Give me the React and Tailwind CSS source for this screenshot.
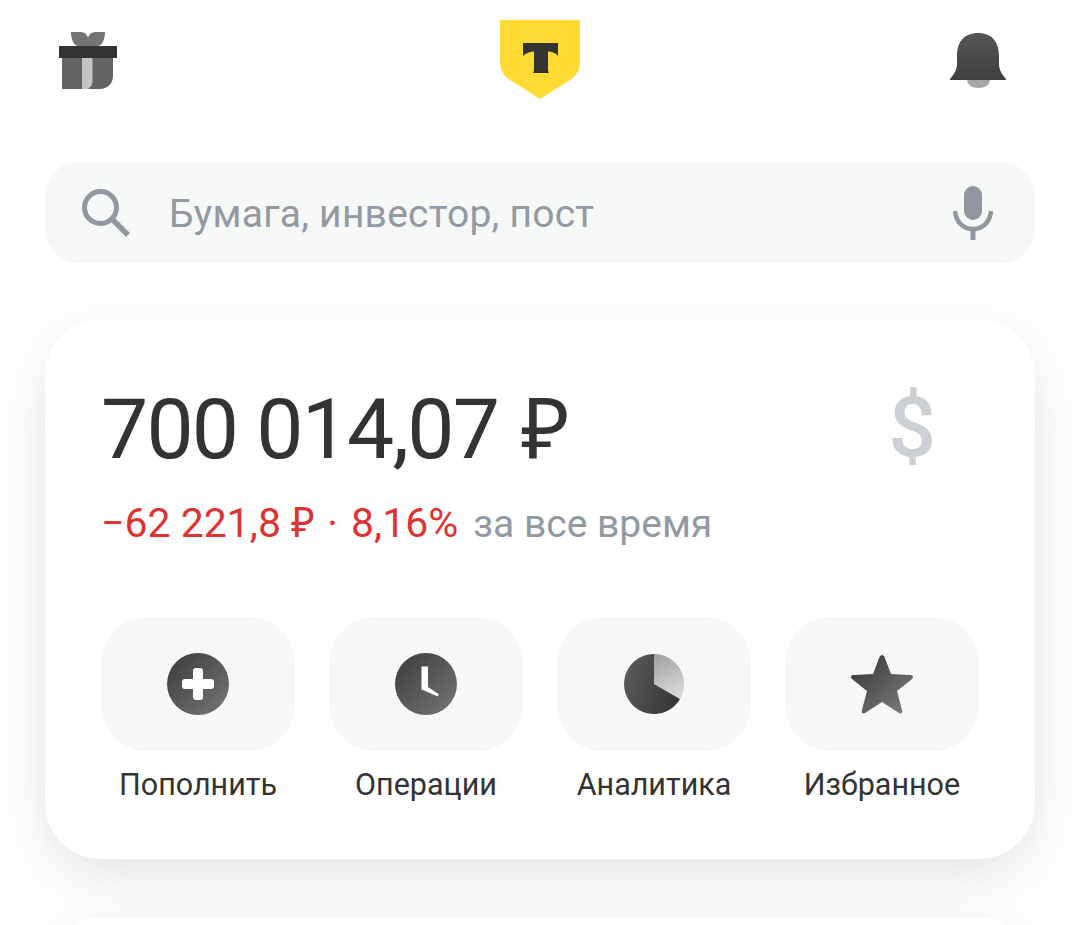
const FONT = "font-['Roboto','Noto_Sans',sans-serif]";

function Grad({ id, from = "#3a3a3a", to = "#777777", x1 = 0, y1 = 0, x2 = 1, y2 = 1 }) {
  return (
    <linearGradient id={id} x1={x1} y1={y1} x2={x2} y2={y2}>
      <stop offset="0%" stopColor={from} />
      <stop offset="100%" stopColor={to} />
    </linearGradient>
  );
}

function GiftIcon() {
  return (
    <svg width="58" height="59" viewBox="59 31 58 59" className="mt-[11px] shrink-0">
      <path d="M71 32 H80 C84 32 87 34 88 38 C89 34 92 32 96 32 H105 C105 38 103 46 97 46 H79 C73 46 71 38 71 32 Z" fill="#737373" />
      <rect x="59" y="46" width="58" height="12" fill="#333333" />
      <rect x="62" y="58" width="20.500" height="31" fill="#636363" />
      <path d="M82 58 H93 V80 C93 85 90 88 87 89 H82 Z" fill="#c4c4c4" />
      <path d="M92.500 58 H113 V76 C113 84 107 89 100 89 H87 C91 88 92.500 84 92.500 80 Z" fill="#636363" />
    </svg>
  );
}

function Logo() {
  return (
    <svg width="80" height="80" viewBox="500 20 80 80" className="ml-[383px] shrink-0">
      <path d="M500 20 H580 V62 C580 70 576 76 570 80 L540 99 L510 80 C504 76 500 70 500 62 Z" fill="#fedb32" />
      <path d="M523 43 H558 V56 C556 53 552 51.500 548 51.500 V66 C548 70 548 72 549 73 H533 C534 72 534 70 534 66 V51.500 C530 51.500 526 53 523 56 Z" fill="#333333" />
    </svg>
  );
}

function BellIcon() {
  return (
    <svg width="56" height="56" viewBox="950 33 56 56" className="ml-[370px] mt-[13px] shrink-0">
      <defs>
        <Grad id="bellGrad" from="#555555" to="#3f3f3f" x1={0} y1={0} x2={0} y2={1} />
      </defs>
      <path d="M967 79 H990 C990 85 985 88 978.500 88 S967 85 967 79 Z" fill="#a8a8a8" />
      <path d="M978 33 C964 33 957 42 957 56 V64 C957 70 954 74 950 79 V80 H1006 V79 C1002 74 999 70 999 64 V56 C999 42 992 33 978 33 Z" fill="url(#bellGrad)" />
    </svg>
  );
}

function SearchIcon() {
  return (
    <svg width="50" height="50" viewBox="0 0 50 50" className="shrink-0">
      <circle cx="19.500" cy="19.500" r="16" fill="none" stroke="#92979f" strokeWidth="5" />
      <path d="M31 31l16 16" stroke="#92979f" strokeWidth="5.500" />
    </svg>
  );
}

function MicIcon() {
  return (
    <svg width="40" height="54" viewBox="0 0 40 54" className="shrink-0">
      <rect x="11" y="0" width="18" height="34" rx="9" fill="#92979f" />
      <path d="M2 25c1 11 8 18 18 18s17-7 18-18" fill="none" stroke="#92979f" strokeWidth="4.500" />
      <path d="M20 42v12" stroke="#92979f" strokeWidth="5" />
    </svg>
  );
}

function PlusIcon() {
  return (
    <svg width="64" height="64" viewBox="0 0 64 64">
      <defs><Grad id="plusGrad" /></defs>
      <circle cx="32" cy="32" r="31" fill="url(#plusGrad)" />
      <rect x="16" y="27" width="32" height="10" rx="3" fill="#ffffff" />
      <rect x="27" y="16" width="10" height="32" rx="3" fill="#ffffff" />
    </svg>
  );
}

function ClockIcon() {
  return (
    <svg width="64" height="64" viewBox="0 0 64 64">
      <defs><Grad id="clockGrad" /></defs>
      <circle cx="32" cy="32" r="31" fill="url(#clockGrad)" />
      <path d="M27.500 14.500 H34 V35 L44.500 42 L44 44.500 L27.500 37.500 Z" fill="#ffffff" />
    </svg>
  );
}

function PieIcon() {
  return (
    <svg width="60" height="60" viewBox="0 0 60 60">
      <defs>
        <Grad id="pieDark" from="#5e5e5e" to="#383838" x1={0} y1={0} x2={1} y2={0.3} />
        <Grad id="pieLight" from="#9e9e9e" to="#d6d6d6" x1={0} y1={0} x2={0.3} y2={1} />
      </defs>
      <path d="M30 0a30 30 0 0 1 26 45L30 30z" fill="url(#pieLight)" />
      <path d="M30 0v30l26 15A30 30 0 1 1 30 0z" fill="url(#pieDark)" />
    </svg>
  );
}

function StarIcon() {
  return (
    <svg width="64" height="60" viewBox="0 0 64 60">
      <defs><Grad id="starGrad" from="#333333" to="#808080" /></defs>
      <path d="M32 1c1 0 2 1 2.500 2L41 20l19 1c3 0 4 2 2 4L47 37l5 19c1 3-1 4-3 3L32 48 15 59c-2 1-4 0-3-3l5-19L2 25c-2-2-1-4 2-4l19-1 6.500-17c.5-1 1.500-2 2.500-2z" fill="url(#starGrad)" />
    </svg>
  );
}

const actions = [
  { label: "Пополнить", icon: <PlusIcon /> },
  { label: "Операции", icon: <ClockIcon /> },
  { label: "Аналитика", icon: <PieIcon /> },
  { label: "Избранное", icon: <StarIcon /> },
];

export default function App() {
  return (
    <div className={`h-[925px] w-[1080px] overflow-hidden bg-white ${FONT}`}>
      {/* Header */}
      <div className="flex items-start pl-[59px] pt-[20px] h-[162px]">
        <GiftIcon />
        <Logo />
        <BellIcon />
      </div>

      {/* Search */}
      <div className="mx-[45px] flex h-[101px] items-center rounded-[34px] bg-[#f6f8f8] pl-[36px] pr-[42px]">
        <SearchIcon />
        <span className="ml-[38px] mt-[3px] flex-1 text-[39px] leading-none tracking-[0.25px] text-[#9299a2]">
          Бумага, инвестор, пост
        </span>
        <MicIcon />
      </div>

      {/* Portfolio card */}
      <div className="mx-[45px] mt-[57px] h-[539px] rounded-[56px] bg-white px-[56px] pt-[60px] shadow-[0_18px_55px_rgba(0,0,0,0.11)]">
        <div className="flex items-center justify-between h-[95px]">
          <span className="text-[84px] leading-none tracking-[-1.8px] text-[#333333]">
            700 014,07 <span className="ml-[4px] font-['Noto_Sans',sans-serif]">₽</span>
          </span>
          <span className="mr-[43px] text-[84px] font-medium leading-none text-[#ccd0d5]">$</span>
        </div>
        <div className="mt-[21px] flex items-baseline leading-[50px]">
          <span className="text-[41px] text-[#dd3333]">
            −62 221,8 <span className="font-['Noto_Sans',sans-serif]">₽</span>
            <span className="ml-[2px]"> · </span>
            <span className="ml-[3px]">8,16%</span>
          </span>
          <span className="ml-[15px] text-[39px] text-[#9299a2]">за все время</span>
        </div>

        <div className="mt-[68px] grid grid-cols-4 gap-[34px]">
          {actions.map((a) => (
            <div key={a.label} className="flex flex-col items-center">
              <div className="flex h-[134px] w-full items-center justify-center rounded-[46px] bg-[#f6f8f8]">
                {a.icon}
              </div>
              <span className="mt-[16px] text-[30.500px] leading-[36px] text-[#333333] whitespace-nowrap">
                {a.label}
              </span>
            </div>
          ))}
        </div>
      </div>

      {/* Next card peeking at the bottom */}
      <div className="mx-[45px] mt-[58px] h-[200px] rounded-t-[56px] bg-white shadow-[0_18px_55px_rgba(0,0,0,0.11)]" />
    </div>
  );
}
